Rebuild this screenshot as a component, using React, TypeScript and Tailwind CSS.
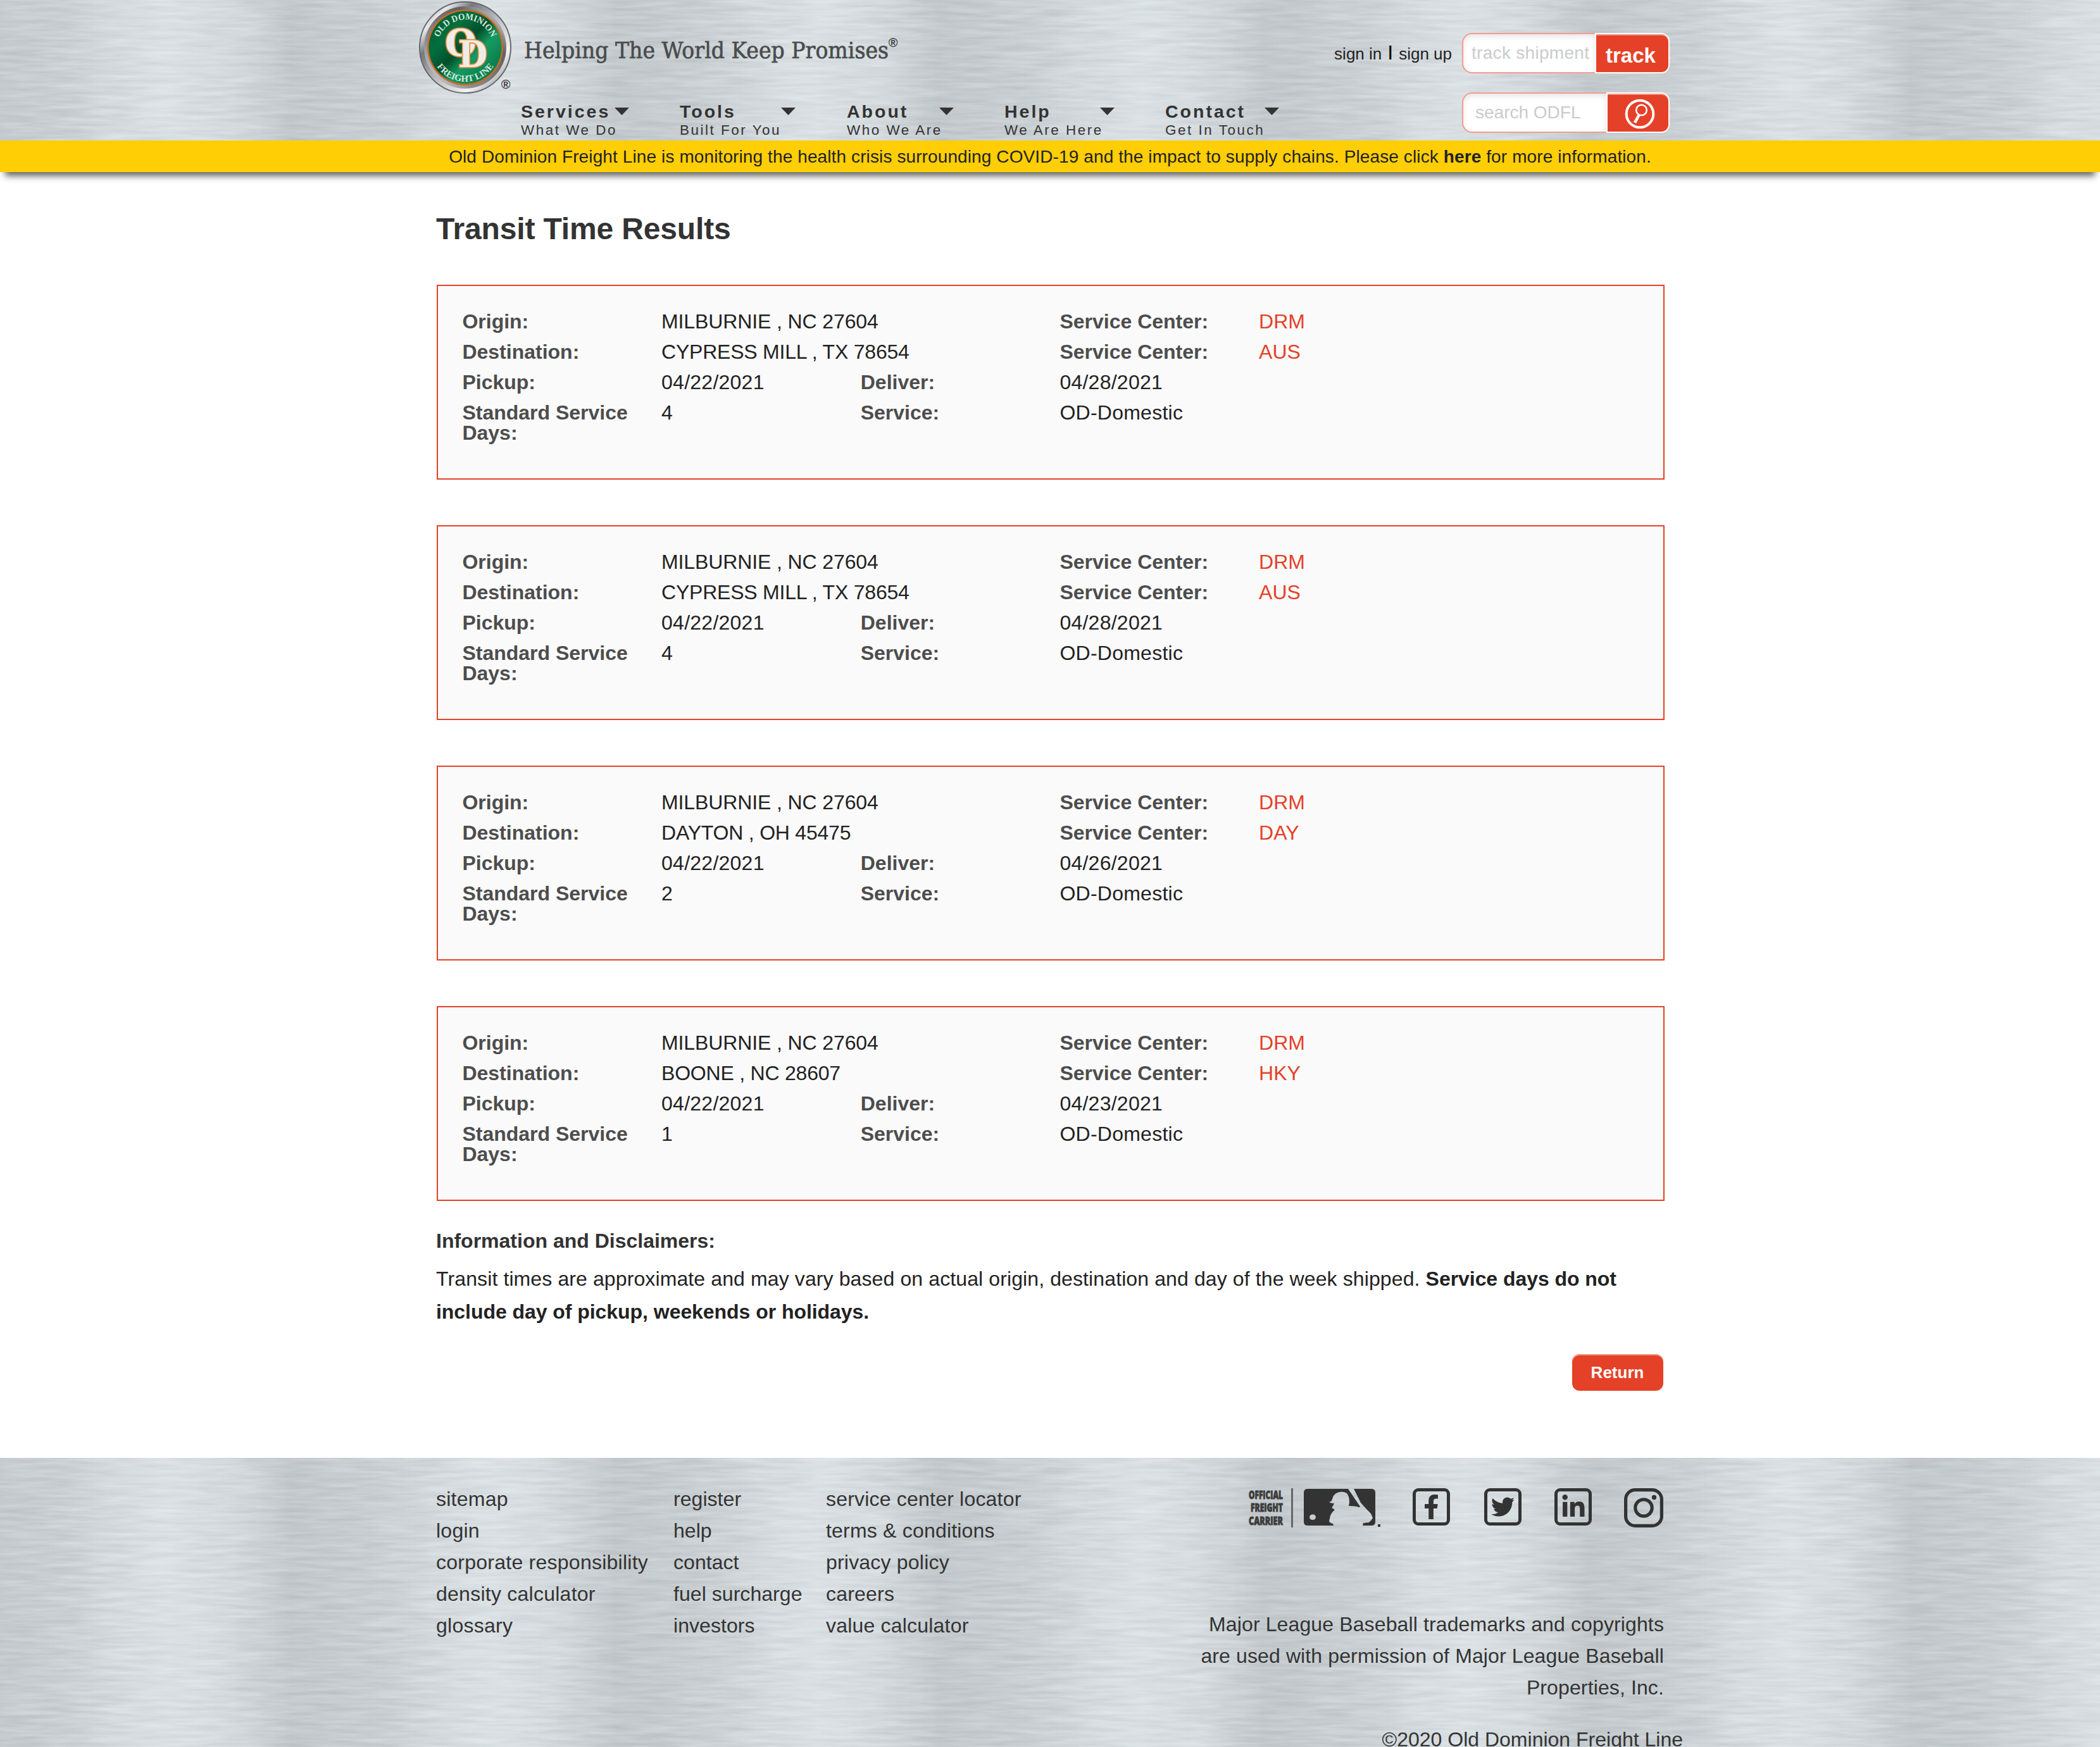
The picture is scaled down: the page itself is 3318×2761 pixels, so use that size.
import React from "react";
import { FaFacebookF, FaTwitter, FaLinkedinIn } from "react-icons/fa";

type Shipment = {
  origin: string;
  destination: string;
  originCenter: string;
  destinationCenter: string;
  pickup: string;
  deliver: string;
  days: string;
};

const shipments: Shipment[] = [
  { origin: "MILBURNIE , NC 27604", destination: "CYPRESS MILL , TX 78654", originCenter: "DRM", destinationCenter: "AUS", pickup: "04/22/2021", deliver: "04/28/2021", days: "4" },
  { origin: "MILBURNIE , NC 27604", destination: "CYPRESS MILL , TX 78654", originCenter: "DRM", destinationCenter: "AUS", pickup: "04/22/2021", deliver: "04/28/2021", days: "4" },
  { origin: "MILBURNIE , NC 27604", destination: "DAYTON , OH 45475", originCenter: "DRM", destinationCenter: "DAY", pickup: "04/22/2021", deliver: "04/26/2021", days: "2" },
  { origin: "MILBURNIE , NC 27604", destination: "BOONE , NC 28607", originCenter: "DRM", destinationCenter: "HKY", pickup: "04/22/2021", deliver: "04/23/2021", days: "1" },
];

const nav = [
  { title: "Services", sub: "What We Do", cell: "w-[251px]", head: "w-[171px]" },
  { title: "Tools", sub: "Built For You", cell: "w-[264px]", head: "w-[183px]" },
  { title: "About", sub: "Who We Are", cell: "w-[249px]", head: "w-[169px]" },
  { title: "Help", sub: "We Are Here", cell: "w-[254px]", head: "w-[174px]" },
  { title: "Contact", sub: "Get In Touch", cell: "w-[251px]", head: "w-[180px]" },
];

const footerLinks = [
  { style: "w-[375px] tracking-[0.25px]", links: ["sitemap", "login", "corporate responsibility", "density calculator", "glossary"] },
  { style: "w-[241px] tracking-[0.05px]", links: ["register", "help", "contact", "fuel surcharge", "investors"] },
  { style: "tracking-[0.2px]", links: ["service center locator", "terms & conditions", "privacy policy", "careers", "value calculator"] },
];

/* Brushed steel texture laid behind the header and the footer */
function Steel({ id, height }: { id: string; height: number }) {
  return (
    <svg className="absolute inset-0 -z-10 block" width="3318" height={height} aria-hidden="true">
      <defs>
        <filter id={`${id}-grain`} x="0" y="0" width="100%" height="100%" colorInterpolationFilters="sRGB">
          <feTurbulence type="fractalNoise" baseFrequency="0.014 0.16" numOctaves="3" seed="7" />
          <feColorMatrix values="0.13 0 0 0 0.745  0.13 0 0 0 0.768  0.13 0 0 0 0.78  0 0 0 0 1" />
        </filter>
        <linearGradient id={`${id}-sheen`} x1="0" x2="1" y1="0" y2="0">
          <stop offset="0" stopColor="#8b9397" stopOpacity="0.15" />
          <stop offset="0.14" stopColor="#8b9397" stopOpacity="0.1" />
          <stop offset="0.34" stopColor="#eef5f8" stopOpacity="0.14" />
          <stop offset="0.52" stopColor="#eef5f8" stopOpacity="0.36" />
          <stop offset="0.7" stopColor="#eef5f8" stopOpacity="0.16" />
          <stop offset="0.9" stopColor="#8b9397" stopOpacity="0.18" />
          <stop offset="1" stopColor="#8b9397" stopOpacity="0.15" />
        </linearGradient>
        <pattern id={`${id}-bands`} width="512" height={height} patternUnits="userSpaceOnUse">
          <rect width="512" height={height} fill={`url(#${id}-sheen)`} />
        </pattern>
      </defs>
      <rect width="3318" height={height} filter={`url(#${id}-grain)`} />
      <rect width="3318" height={height} fill={`url(#${id}-bands)`} />
    </svg>
  );
}

function Logo() {
  return (
    <svg width="780" height="152" viewBox="660 0 780 152" className="block">
      <defs>
        <linearGradient id="chrome" x1="0" y1="0" x2="1" y2="1">
          <stop offset="0" stopColor="#6f7074" />
          <stop offset="0.18" stopColor="#e9e9ec" />
          <stop offset="0.3" stopColor="#77787c" />
          <stop offset="0.5" stopColor="#b9babd" />
          <stop offset="0.75" stopColor="#f3f3f5" />
          <stop offset="1" stopColor="#6a6b70" />
        </linearGradient>
        <linearGradient id="chromeInner" x1="1" y1="0" x2="0" y2="1">
          <stop offset="0" stopColor="#f5f5f5" />
          <stop offset="0.3" stopColor="#5f6064" />
          <stop offset="0.7" stopColor="#8c8d91" />
          <stop offset="1" stopColor="#e8e8ea" />
        </linearGradient>
        <linearGradient id="enamel" x1="0" y1="0" x2="1" y2="1">
          <stop offset="0" stopColor="#01552f" />
          <stop offset="0.3" stopColor="#00703f" />
          <stop offset="0.48" stopColor="#024f2a" />
          <stop offset="0.62" stopColor="#159a63" />
          <stop offset="1" stopColor="#00683a" />
        </linearGradient>
        <path id="arcTop" d="M 691 75 A 44 44 0 0 1 779 75" />
        <path id="arcBottom" d="M 681 75 A 54 54 0 0 0 789 75" />
      </defs>
      <circle cx="735" cy="75" r="72" fill="url(#chrome)" stroke="#67686c" strokeWidth="2" />
      <circle cx="735" cy="75" r="65" fill="url(#chromeInner)" />
      <circle cx="735" cy="75" r="60" fill="#d06a22" />
      <circle cx="735" cy="75" r="57.500" fill="url(#enamel)" />
      <g fill="#d8eadf" fontFamily="Liberation Serif, serif" fontWeight="700" fontSize="14.500">
        <text textLength="106" lengthAdjust="spacingAndGlyphs">
          <textPath href="#arcTop" startOffset="16">OLD DOMINION</textPath>
        </text>
        <text textLength="106" lengthAdjust="spacingAndGlyphs">
          <textPath href="#arcBottom" startOffset="32">FREIGHT LINE</textPath>
        </text>
      </g>
      <g fontFamily="DejaVu Serif, serif" fontWeight="700" fill="#efece8" stroke="#e08a35" strokeWidth="3.500" strokeLinejoin="round" paintOrder="stroke">
        <text x="703" y="88" fontSize="57" textLength="50" lengthAdjust="spacingAndGlyphs">O</text>
        <text x="724" y="106" fontSize="58" textLength="46" lengthAdjust="spacingAndGlyphs">D</text>
      </g>
      <text x="799" y="140" textAnchor="middle" fontSize="20" fontWeight="700" fill="#3a3a3a" fontFamily="Liberation Sans, sans-serif">®</text>
      <text x="828" y="92" fontSize="35" fill="#4a4c4e" stroke="#4a4c4e" strokeWidth="0.700" fontFamily="DejaVu Serif, serif" textLength="576" lengthAdjust="spacingAndGlyphs">
        Helping The World Keep Promises
      </text>
      <text x="1411" y="74" textAnchor="middle" fontSize="20" fontWeight="700" fill="#3a3a3a" fontFamily="Liberation Sans, sans-serif">®</text>
    </svg>
  );
}

function Header() {
  return (
    <header className="relative isolate flex h-[222px] pl-[660px]">
      <Steel id="head" height={222} />
      <div className="flex w-[1440px] flex-col">
        <Logo />
        <nav className="flex pl-[163px] pt-[8px]">
          {nav.map((item) => (
            <div key={item.title} className={item.cell}>
              <div className={`flex items-start justify-between ${item.head}`}>
                <span className="text-[28.500px] font-bold leading-[32px] tracking-[3px] text-[#333]">{item.title}</span>
                <svg width="23" height="12" viewBox="0 0 23 12" className="mt-[10px] shrink-0">
                  <path d="M0 0h23L11.500 12z" fill="#333" />
                </svg>
              </div>
              <span className="block whitespace-nowrap pt-[1px] text-[22.400px] leading-[26px] tracking-[2.550px] text-[#333]">{item.sub}</span>
            </div>
          ))}
        </nav>
      </div>
      <div className="flex w-[538px] flex-col items-end gap-[30px] pt-[52px]">
        <div className="flex">
          <div className="flex items-baseline pr-[16px] pt-[13px] text-[26px] leading-[36px] text-[#222]">
            <span>sign in</span>
            <span className="px-[9px] text-[32px] leading-[36px] text-black">I</span>
            <span>sign up</span>
          </div>
          <div className="flex h-[64px] w-[328px]">
            <div className="w-[210px] rounded-l-[16px] border-2 border-r-0 border-[#f39c8f] bg-white pl-[13px] pt-[12px] text-[28px] leading-[36px] text-[#c9cccb] shadow-[inset_0_4px_8px_rgba(0,0,0,0.1)]">
              <span className="whitespace-nowrap tracking-[0.300px]">track shipment</span>
            </div>
            <div className="w-[118px] rounded-r-[13px] border-2 border-white bg-[#e54128] pl-[15px] pt-[16px] text-[33px] font-bold leading-[36px] text-white shadow-[inset_0_2px_0_#f3988a]">
              track
            </div>
          </div>
        </div>
        <div className="flex h-[64px] w-[328px]">
          <div className="w-[228px] rounded-l-[16px] border-2 border-r-0 border-[#f39c8f] bg-white pl-[19px] pt-[12px] text-[28px] leading-[36px] text-[#c9cccb] shadow-[inset_0_4px_8px_rgba(0,0,0,0.1)]">
            search ODFL
          </div>
          <div className="w-[100px] rounded-r-[13px] border-2 border-white bg-[#e54128] pl-[27px] pt-[8px] shadow-[inset_0_2px_0_#f3988a]">
            <svg width="48" height="48" viewBox="0 0 48 48" fill="none" stroke="#fff">
              <circle cx="24" cy="24" r="21.300" strokeWidth="4" />
              <circle cx="26.500" cy="18" r="8.300" strokeWidth="2.600" />
              <path d="M22.800 25.500L16 37.800" strokeWidth="4.600" />
            </svg>
          </div>
        </div>
      </div>
    </header>
  );
}

function Label({ children }: { children: React.ReactNode }) {
  return <div className="px-[14.400px] font-bold text-[#4d4d4d]">{children}</div>;
}

function Value({ children, className = "" }: { children: React.ReactNode; className?: string }) {
  return <div className={`px-[14.400px] ${className}`}>{children}</div>;
}

function ResultCard({ s }: { s: Shipment }) {
  return (
    <section className="-mr-[1px] mb-[72px] ml-[1px] h-[308px] border-2 border-[#e54128] bg-[#fafafa] px-[24px] pt-[40px] text-[32px] leading-[32px] text-[#222]">
      <div className="grid grid-cols-6 gap-y-[16px]">
        <Label>Origin:</Label>
        <Value className="col-span-2 tracking-[-0.120px]">{s.origin}</Value>
        <Label>Service Center:</Label>
        <Value className="col-span-2 text-[#e54128]"><a>{s.originCenter}</a></Value>
        <Label>Destination:</Label>
        <Value className="col-span-2 tracking-[-0.220px]">{s.destination}</Value>
        <Label>Service Center:</Label>
        <Value className="col-span-2 text-[#e54128]"><a>{s.destinationCenter}</a></Value>
        <Label>Pickup:</Label>
        <Value className="tracking-[0.250px]">{s.pickup}</Value>
        <Label>Deliver:</Label>
        <Value className="col-span-3 tracking-[0.250px]">{s.deliver}</Value>
        <Label>Standard Service Days:</Label>
        <Value>{s.days}</Value>
        <Label>Service:</Label>
        <Value className="col-span-3 tracking-[0.250px]">OD-Domestic</Value>
      </div>
    </section>
  );
}

function Baseball() {
  return (
    <svg width="122" height="62" viewBox="0 0 122 62" fill="#333">
      <path fillRule="evenodd" d="M6 1H70L89 29Q88 31 84 29Q78 28 71 28L72 23Q72 12 68 8Q63 5 57 6Q49 7 46 14L44 20L40 22Q43 24 48 24L46 28Q43 31 46 32L49 34Q44 38 42 43L40 52Q41 55 46 56L47 59H6Q0 59 0 53V7Q0 1 6 1ZM14 41.500A4.300 4.300 0 1 0 14 50A4.300 4.300 0 1 0 14 41.500Z" />
      <path d="M79 1H107Q113 1 113 7V53Q113 59 107 59H93L94 55L103 54Q106 52 109 47L106 40L99 33L90 23Z" />
      <rect x="117" y="57" width="4" height="4" />
    </svg>
  );
}

function SocialBox({ children }: { children: React.ReactNode }) {
  return <div className="flex size-[59px] items-center justify-center rounded-[9px] border-[5px] border-[#333] text-[#333]">{children}</div>;
}

function Footer() {
  return (
    <footer className="relative isolate h-[457px] overflow-hidden">
      <Steel id="foot" height={457} />
      <div className="mx-auto flex w-[1940px] justify-between text-[32px] leading-[50px] text-[#333]">
        <div className="flex pt-[40px]">
          {footerLinks.map((column) => (
            <ul key={column.links[0]} className={column.style}>
              {column.links.map((link) => (
                <li key={link}><a>{link}</a></li>
              ))}
            </ul>
          ))}
        </div>
        <div className="flex w-[760px] flex-col items-end pt-[48px]">
          <div className="flex h-[62px] w-[658px] items-start">
            <svg className="shrink-0 overflow-visible" width="61" height="62" viewBox="0 0 61 62" fill="#3c3c3c" stroke="#3c3c3c" strokeWidth="0.900" fontFamily="Open Sans, sans-serif" fontWeight="800" fontSize="17">
              <text x="2" y="16.500" textLength="54" lengthAdjust="spacingAndGlyphs">OFFICIAL</text>
              <text x="5" y="37" textLength="51" lengthAdjust="spacingAndGlyphs">FREIGHT</text>
              <text x="2" y="57.500" textLength="54" lengthAdjust="spacingAndGlyphs">CARRIER</text>
            </svg>
            <div className="ml-[8px] h-[62px] w-[3px] bg-[#666]" />
            <div className="ml-[17px]"><Baseball /></div>
            <div className="ml-[50px]"><SocialBox><FaFacebookF size={39} /></SocialBox></div>
            <div className="ml-[54px]"><SocialBox><FaTwitter size={37} /></SocialBox></div>
            <div className="ml-[52px]"><SocialBox><FaLinkedinIn size={40} /></SocialBox></div>
            <svg className="ml-[51px] shrink-0" width="62" height="62" viewBox="0 0 62 62" fill="none" stroke="#333" strokeWidth="5.200">
              <rect x="2.600" y="2.600" width="56.800" height="56.800" rx="15" />
              <circle cx="31" cy="31" r="13.200" />
              <circle cx="47.500" cy="14.500" r="3.700" fill="#333" stroke="none" />
            </svg>
          </div>
          <p className="w-[760px] pt-[128px] text-right tracking-[0.120px]">
            Major League Baseball trademarks and copyrights<br />
            are used with permission of Major League Baseball<br />
            Properties, Inc.
          </p>
          <p className="-mr-[30px] mt-[32px]">©2020 Old Dominion Freight Line</p>
        </div>
      </div>
    </footer>
  );
}

export default function App() {
  return (
    <div className="h-[2761px] w-[3318px] overflow-hidden bg-white font-['Liberation_Sans',Arial,sans-serif]">
      <div className="shadow-[0_14px_10px_-8px_rgba(0,0,0,0.62)]">
        <Header />
        <div className="h-[50px] bg-[#ffce05] text-center text-[28px] leading-[52px] tracking-[0.110px] text-[#222]">
          Old Dominion Freight Line is monitoring the health crisis surrounding COVID-19 and the impact to supply chains. Please click <b>here</b> for more information.
        </div>
      </div>
      <main className="mx-auto h-[2032px] w-[1940px]">
        <h1 className="pb-[58px] pt-[60px] text-[48px] font-bold leading-[60px] tracking-[-0.150px] text-[#333]">Transit Time Results</h1>
        {shipments.map((s, i) => (
          <ResultCard key={i} s={s} />
        ))}
        <h2 className="-mt-[35px] text-[32px] font-bold leading-[52px] text-[#333]">Information and Disclaimers:</h2>
        <p className="pt-[8px] text-[32px] leading-[52px] tracking-[0.110px] text-[#222]">
          Transit times are approximate and may vary based on actual origin, destination and day of the week shipped.{" "}
          <b className="tracking-[-0.050px]">Service days do not<br />include day of pickup, weekends or holidays.</b>
        </p>
        <div className="flex justify-end pr-[1px] pt-[41px]">
          <button className="h-[58px] w-[144px] rounded-[12px] bg-[#e54128] pr-[1px] text-[26px] font-bold leading-[58px] text-white shadow-[inset_0_2px_0_#f3988a]">Return</button>
        </div>
      </main>
      <Footer />
    </div>
  );
}
